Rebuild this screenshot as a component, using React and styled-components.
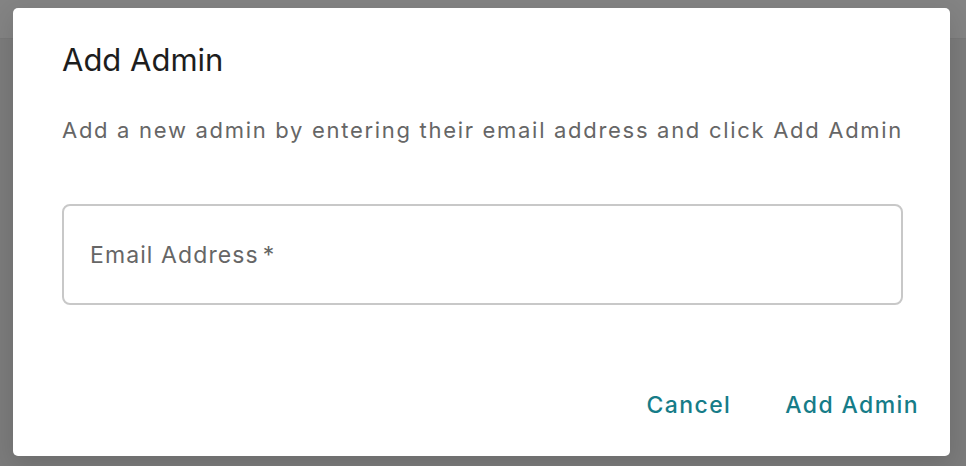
import React from 'react'
import styled, { createGlobalStyle } from 'styled-components'

const GlobalStyle = createGlobalStyle`
  html, body {
    margin: 0;
    padding: 0;
    height: 100%;
  }
  body {
    font-family: Inter, "Noto Sans", "Liberation Sans", sans-serif;
    background: #7b7b7b;
    overflow: hidden;
  }
`

const Backdrop = styled.div`
  position: fixed;
  inset: 0;
  background: #7b7b7b;
`

const AppBar = styled.div`
  height: 38px;
  background: #838383;
  border-bottom: 1px solid #787878;
`

const Dialog = styled.div`
  position: absolute;
  top: 8px;
  left: 13px;
  width: 937px;
  box-sizing: border-box;
  display: flex;
  flex-direction: column;
  padding: 32px 47px 25px 49px;
  background: #fff;
  border-radius: 5px;
  box-shadow: 0 8px 24px rgba(0, 0, 0, 0.12);
`

const Title = styled.h2`
  margin: 0;
  font-size: 31px;
  line-height: 40px;
  font-weight: 400;
  letter-spacing: 0;
  color: #1d1d1d;
`

const Description = styled.p`
  margin: 34px 0 0;
  font-size: 22px;
  line-height: 32px;
  font-weight: 400;
  letter-spacing: 1.7px;
  color: #666;
  white-space: nowrap;
`

const Field = styled.label`
  margin-top: 58px;
  height: 101px;
  box-sizing: border-box;
  display: flex;
  align-items: center;
  padding: 0 26px;
  border: 2px solid #c8c8c8;
  border-radius: 8px;
  font-size: 23px;
  letter-spacing: 1.1px;
  color: #666;
`

const Asterisk = styled.span`
  margin-left: 4px;
`

const Actions = styled.div`
  margin: 74px -32px 0 0;
  display: flex;
  justify-content: flex-end;
  gap: 22px;
`

const TextButton = styled.button`
  padding: 12px 16px;
  border: 0;
  border-radius: 6px;
  background: transparent;
  font-family: inherit;
  font-size: 23px;
  line-height: 28px;
  font-weight: 500;
  letter-spacing: 1.4px;
  color: #167c88;
  cursor: pointer;
`

export default function App() {
  return (
    <>
      <GlobalStyle />
      <Backdrop>
        <AppBar />
        <Dialog>
          <Title>Add Admin</Title>
          <Description>
            Add a new admin by entering their email address and click Add Admin
          </Description>
          <Field>
            Email Address<Asterisk>*</Asterisk>
          </Field>
          <Actions>
            <TextButton>Cancel</TextButton>
            <TextButton>Add Admin</TextButton>
          </Actions>
        </Dialog>
      </Backdrop>
    </>
  )
}
